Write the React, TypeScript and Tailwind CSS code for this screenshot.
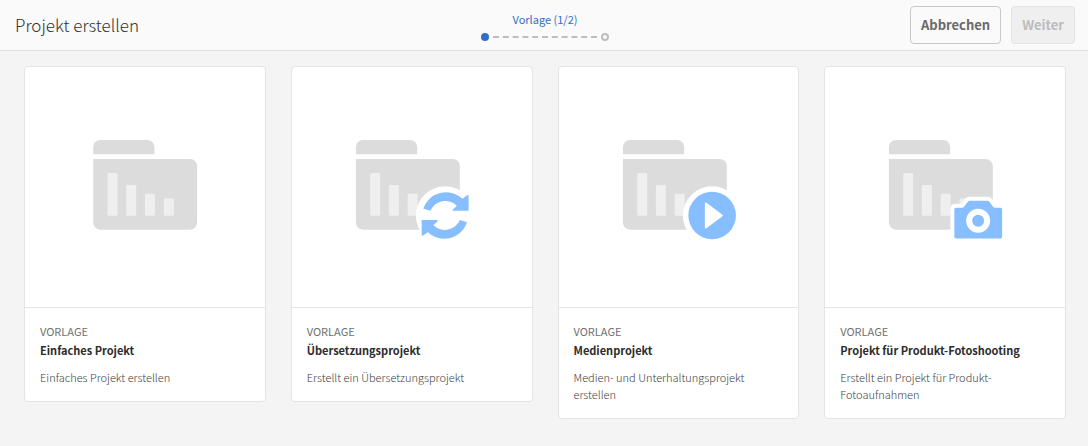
import type { ReactNode } from 'react';

type Badge = 'none' | 'sync' | 'play' | 'camera';

interface Template {
  title: string;
  description: string;
  badge: Badge;
}

const templates: Template[] = [
  { title: 'Einfaches Projekt', description: 'Einfaches Projekt erstellen', badge: 'none' },
  { title: 'Übersetzungsprojekt', description: 'Erstellt ein Übersetzungsprojekt', badge: 'sync' },
  { title: 'Medienprojekt', description: 'Medien- und Unterhaltungsprojekt erstellen', badge: 'play' },
  {
    title: 'Projekt für Produkt-Fotoshooting',
    description: 'Erstellt ein Projekt für Produkt-Fotoaufnahmen',
    badge: 'camera',
  },
];

const SYNC_ARROW =
  'M67.5 68.8 A23.8 23.8 0 0 1 106.5 58.8 L111.5 55.4 Q112.8 54.8 112.8 56 V71 H97.5 Q96 71 97 69.8 L101 65.8 A16.4 16.4 0 0 0 74.5 71 Z';

const CAMERA_BODY =
  'M67 68 H73.2 Q74.4 68 75.2 67 L79 62 Q79.8 61 81 61 H98.5 Q99.7 61 100.5 62 L104.3 67 Q105.1 68 106.3 68 H111.8 Q113.3 68 113.3 69.5 V97.3 Q113.3 98.8 111.8 98.8 H67 Q65.5 98.8 65.5 97.3 V69.5 Q65.5 68 67 68 Z';

const badges: Record<Badge, ReactNode> = {
  none: null,
  sync: (
    <>
      <circle cx="89.3" cy="75.6" r="29.3" fill="#fff" />
      <path d={SYNC_ARROW} fill="#87beff" />
      <path d={SYNC_ARROW} fill="#87beff" transform="rotate(180 89.3 75.6)" />
    </>
  ),
  play: (
    <>
      <circle cx="89.3" cy="75.6" r="29.3" fill="#fff" />
      <circle cx="89.3" cy="75.6" r="23.8" fill="#87beff" />
      <path d="M83 63.7 L99 75.7 L83 87.7 Z" fill="#fff" stroke="#fff" strokeWidth="2" strokeLinejoin="round" />
    </>
  ),
  camera: (
    <>
      <path d={CAMERA_BODY} fill="#fff" stroke="#fff" strokeWidth="8" strokeLinejoin="round" />
      <path d={CAMERA_BODY} fill="#87beff" />
      <circle cx="89.3" cy="81" r="9" fill="none" stroke="#fff" strokeWidth="6" />
    </>
  ),
};

function TemplateArt({ badge }: { badge: Badge }) {
  return (
    <svg viewBox="0 0 240 240" className="block aspect-square w-full" aria-hidden="true">
      <g transform={badge === 'none' ? 'translate(68.3 73)' : 'translate(64 73)'}>
        <path d="M0 14.3 V7 A7 7 0 0 1 7 0 H54.3 A7 7 0 0 1 61.3 7 V14.3 Z" fill="#dcdcdc" />
        <path
          d="M0 19 H97 A7 7 0 0 1 104 26 V82.8 A7 7 0 0 1 97 89.8 H7 A7 7 0 0 1 0 82.8 Z"
          fill="#dcdcdc"
        />
        <g fill="#efefef">
          <rect x="14.3" y="33" width="10" height="43" rx="1.2" />
          <rect x="33" y="45" width="10" height="31" rx="1.2" />
          <rect x="51.8" y="54" width="10" height="22" rx="1.2" />
          <rect x="70.7" y="58.7" width="10" height="17.3" rx="1.2" />
        </g>
        {badges[badge]}
      </g>
    </svg>
  );
}

function TemplateCard({ title, description, badge }: Template) {
  return (
    <article className="rounded border border-[#e4e4e4] bg-white">
      <TemplateArt badge={badge} />
      <div className="border-t border-[#e4e4e4] px-[15px] py-[15px]">
        <p className="text-[11px] leading-[17px] text-[#707070] uppercase">Vorlage</p>
        <h2 className="text-[11px] leading-5 font-bold text-[#2c2c2c]">{title}</h2>
        <p className="mt-[9px] text-[11px] leading-[17px] font-light text-[#404040]">{description}</p>
      </div>
    </article>
  );
}

function Stepper() {
  return (
    <div className="flex flex-col items-center">
      <p className="text-[11px] leading-5 text-[#326ec8]">Vorlage (1/2)</p>
      <div className="mt-1 flex items-center gap-1">
        <span className="size-2 rounded-full bg-[#326ec8]" />
        <svg width="104" height="2" viewBox="0 0 104 2" aria-hidden="true">
          <line x1="0" y1="1" x2="104" y2="1" stroke="#bebebe" strokeWidth="2" strokeDasharray="6 3.8" />
        </svg>
        <span className="size-2 rounded-full border-2 border-[#bebebe]" />
      </div>
    </div>
  );
}

export default function App() {
  return (
    <div className="min-h-screen bg-[#f4f4f4] font-['Noto_Sans_CJK_SC',sans-serif]">
      <header className="grid grid-cols-[1fr_auto_1fr] items-center border-b border-[#e0e0e0] bg-[#fafafa] pr-[13px] pl-[15px] py-[6px]">
        <h1 className="text-[17px] leading-6 font-light text-[#323232]">Projekt erstellen</h1>
        <Stepper />
        <div className="flex justify-end gap-[10px]">
          <button
            type="button"
            className="h-[38px] rounded border border-[#c8c8c8] px-[10px] text-[13px] font-bold text-[#6a6a6a]"
          >
            Abbrechen
          </button>
          <button
            type="button"
            disabled
            className="h-[38px] rounded border border-[#e2e2e2] bg-[#efefef] px-[10px] text-[13px] font-bold text-[#bcbcbc]"
          >
            Weiter
          </button>
        </div>
      </header>
      <main className="grid grid-cols-4 items-start gap-[25px] pt-[15px] pr-[22px] pb-6 pl-6">
        {templates.map((template) => (
          <TemplateCard key={template.title} {...template} />
        ))}
      </main>
    </div>
  );
}
